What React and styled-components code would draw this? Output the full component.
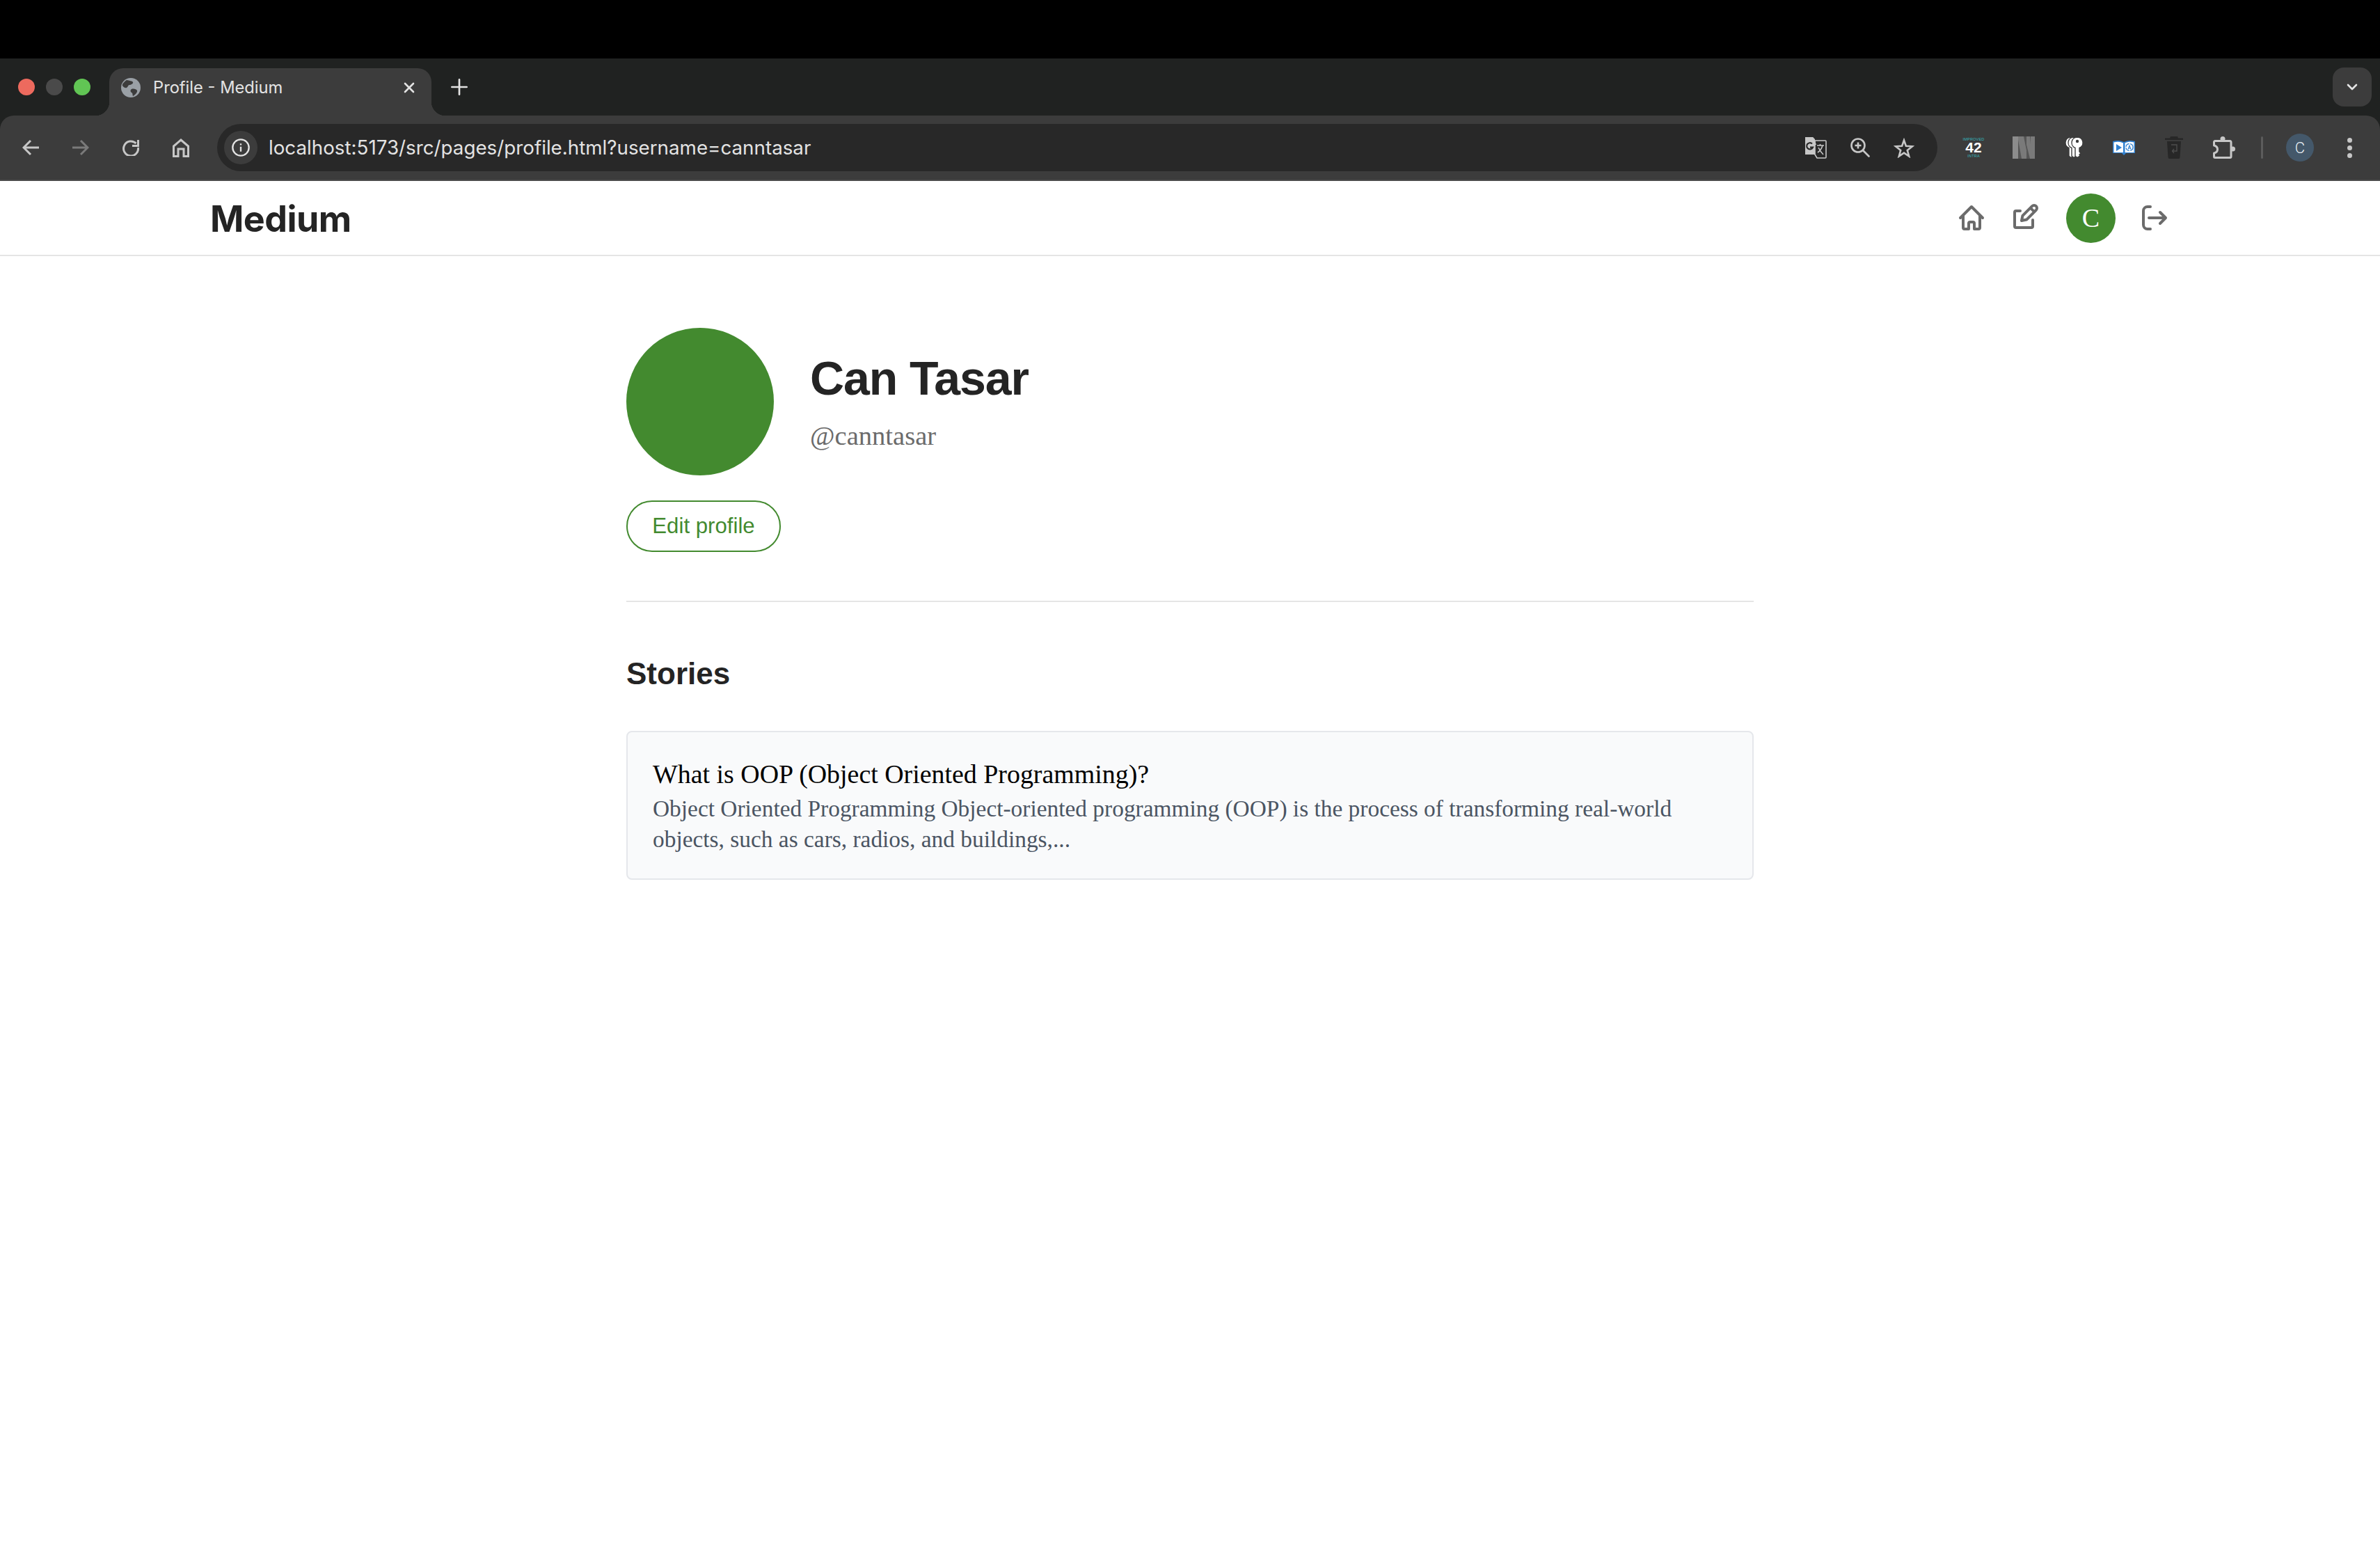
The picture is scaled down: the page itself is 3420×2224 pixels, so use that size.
import React from 'react';
import styled, { createGlobalStyle } from 'styled-components';

const GlobalStyle = createGlobalStyle`
  html, body {
    margin: 0;
    padding: 0;
    background: #fff;
  }
  body {
    font-family: 'Liberation Sans', Arial, sans-serif;
  }
`;

function Line({ d, size = 32, stroke = '#c7c7c7', width = 2.2 }) {
  return (
    <svg width={size} height={size} viewBox="0 0 24 24" fill="none" stroke={stroke} strokeWidth={width} strokeLinecap="round" strokeLinejoin="round">
      <path d={d} />
    </svg>
  );
}

function GlobeIcon() {
  return (
    <svg width="28" height="28" viewBox="0 0 28 28">
      <circle cx="14" cy="14" r="14" fill="#9aa0a6" />
      <path d="M8 3c3 1 8 1 9 3s-3 4-5 4-2 3-4 4-5-1-6-3 3-6 6-8ZM15 16c3-1 7 0 8 2s-3 7-6 8c-1-3 0-4-2-5s-2-4 0-5Z" fill="#3c3c3c" />
    </svg>
  );
}

function BackIcon({ color = '#c7c7c7', flip }) {
  return (
    <svg width="24" height="24" viewBox="0 0 24 24" fill="none" stroke={color} strokeWidth="3" transform={flip ? 'scale(-1 1)' : undefined}>
      <path d="M24 12H3M12 2L2 12l10 10" />
    </svg>
  );
}

function ReloadIcon() {
  return (
    <svg width="24" height="24" viewBox="0 0 24 24" fill="none" stroke="#c7c7c7" strokeWidth="3">
      <path d="M19.5 6A10.5 10.5 0 1 0 22.5 12" />
      <path d="M22.5 1v8.5H14" />
    </svg>
  );
}

function HomeChromeIcon() {
  return (
    <svg width="24" height="27" viewBox="0 0 24 27" fill="none" stroke="#c7c7c7" strokeWidth="3">
      <path d="M1.5 25.5V11L12 2l10.5 9v14.5H16V15H8v10.5Z" />
    </svg>
  );
}

function TranslateIcon() {
  return (
    <svg width="32" height="32" viewBox="0 0 32 32">
      <path d="M1 1h11l3 3v22H1Z" fill="#c7c7c7" />
      <path d="M15 6h15a1 1 0 0 1 1 1v23a1 1 0 0 1-1 1H18l-3-5Z" fill="#282828" stroke="#c7c7c7" strokeWidth="1.6" />
      <path d="M12 1l3 5 2 6h-5Z" fill="#c7c7c7" />
      <path d="M11 10.5a4.6 4.6 0 1 0 1 5.2H8" fill="none" stroke="#282828" strokeWidth="2.2" />
      <path d="M18 13h10M22.5 11v2M26 13c-1.500 5-4 8-7 10M20 16c2 4 4 7 7 10" fill="none" stroke="#c7c7c7" strokeWidth="1.6" />
    </svg>
  );
}

function ZoomIcon() {
  return (
    <svg width="28" height="28" viewBox="0 0 28 28" fill="none" stroke="#c7c7c7" strokeWidth="2.6" strokeLinecap="round">
      <circle cx="11" cy="11" r="9.500" />
      <path d="M18 18l8.500 8.500" />
      <path d="M11 6.500v9M6.500 11h9" strokeLinecap="butt" />
    </svg>
  );
}

function StarIcon() {
  return (
    <svg width="30" height="29" viewBox="0 0 30 29" fill="none" stroke="#c7c7c7" strokeWidth="2.6">
      <path d="M15 3.500l2.900 8.200 9 .6-7.100 5.600 2.400 8.600-7.200-4.900-7.200 4.900 2.400-8.600-7.100-5.600 9-.6Z" />
    </svg>
  );
}

function StripedNIcon() {
  return (
    <svg width="32" height="32" viewBox="0 0 32 32">
      <rect width="8" height="32" fill="#8c8c8c" />
      <rect x="8" width="24" height="32" fill="#7a7a7a" />
      <path d="M8 5l5 27H8ZM16 0h4l0 20ZM20 12l5 20h-5ZM25 0h1v11Z" fill="#555" />
    </svg>
  );
}

const KEY_PATH =
  'M8 0a8 8 0 0 1 3 15.400V21l2 2-2 2 1 1.500-3 2.500h-2l-2-2V15.400A8 8 0 0 1 8 0Z';

function KeysIcon() {
  return (
    <svg width="25" height="30" viewBox="0 0 25 30">
      <path d={KEY_PATH} transform="translate(0 0)" fill="#fff" stroke="#3c3c3c" strokeWidth="1.400" />
      <path d={KEY_PATH} transform="translate(4 0)" fill="#fff" stroke="#3c3c3c" strokeWidth="1.400" />
      <path d={KEY_PATH} transform="translate(9 0)" fill="#fff" stroke="#3c3c3c" strokeWidth="1.400" />
      <circle cx="17" cy="6" r="2.200" fill="#3c3c3c" />
    </svg>
  );
}

function BookIcon() {
  return (
    <svg width="32" height="22" viewBox="0 0 32 22">
      <path d="M0 2c6-2 11-1 16 1 5-2 10-3 16-1v17H19l-3 3-3-3H0Z" fill="#2f80d0" />
      <path d="M1.500 3.500c5-1.500 9-1 13.500 1V18H1.500ZM17.500 4.500c4-2 8-2.500 13-1V18h-13Z" fill="#fff" />
      <path d="M5 6l8 5-8 5Z" fill="#2f80d0" />
      <circle cx="24" cy="10.500" r="5" fill="none" stroke="#2f80d0" strokeWidth="1.300" strokeDasharray="6.500 1.500" />
      <path d="M22 13.500l2-5.500 2 5.500M22.700 12h2.600" fill="none" stroke="#2f80d0" strokeWidth="1.100" />
    </svg>
  );
}

function TrashIcon() {
  return (
    <svg width="26" height="32" viewBox="0 0 26 32">
      <path d="M8 0h10l1 2.500h7V5H0V2.500h7Z" fill="#272727" />
      <path d="M3 7h20l-1.500 23a2 2 0 0 1-2 2h-13a2 2 0 0 1-2-2Z" fill="#272727" />
      <path d="M9 12h8v9h-6M13 18l-2.500 3 2.500 3" fill="none" stroke="#4d4d4d" strokeWidth="1.400" />
    </svg>
  );
}

function PuzzleIcon() {
  return (
    <svg width="32" height="32" viewBox="0 0 32 32">
      <circle cx="14" cy="3.500" r="3.500" fill="#c7c7c7" />
      <circle cx="28.500" cy="18" r="3.500" fill="#c7c7c7" />
      <path d="M3 6.500h21a2 2 0 0 1 2 2V29a1.500 1.500 0 0 1-1.500 1.500H3a1.500 1.500 0 0 1-1.500-1.500v-5c4-1 5-3 5-5.500S5.500 14 1.500 13V8a1.500 1.500 0 0 1 1.500-1.500Z" fill="none" stroke="#c7c7c7" strokeWidth="3" strokeLinejoin="round" />
    </svg>
  );
}

const Frame = styled.div`
  width: 3420px;
  height: 2224px;
  background: #fff;
  overflow: hidden;
`;

const BlackBar = styled.div`
  height: 84px;
  background: #000;
`;

const ChromeShell = styled.div`
  background: #202221;
`;

const TabStrip = styled.div`
  display: flex;
  align-items: flex-end;
  height: 82px;
  padding: 0 12px 0 26px;
`;

const Lights = styled.div`
  display: flex;
  gap: 16px;
  align-self: center;
  margin-right: 27px;
`;

const Light = styled.span`
  width: 24px;
  height: 24px;
  border-radius: 50%;
  background: ${({ $color }) => $color};
`;

const Tab = styled.div`
  position: relative;
  display: flex;
  align-items: center;
  width: 463px;
  height: 68px;
  padding: 0 20px 13px 17px;
  box-sizing: border-box;
  background: #3c3c3c;
  border-radius: 20px 20px 0 0;
  color: #e3e3e3;
  font-family: Inter, sans-serif;
  font-size: 23.7px;

  &::before,
  &::after {
    content: '';
    position: absolute;
    bottom: 0;
    width: 20px;
    height: 20px;
  }
  &::before {
    left: -20px;
    background: radial-gradient(circle at 0 0, transparent 20px, #3c3c3c 20.5px);
  }
  &::after {
    right: -20px;
    background: radial-gradient(circle at 100% 0, transparent 20px, #3c3c3c 20.5px);
  }
`;

const TabTitle = styled.span`
  flex: 1;
  margin-left: 18px;
  white-space: nowrap;
`;

const TabButton = styled.div`
  display: flex;
  align-items: center;
  justify-content: center;
`;

const NewTab = styled(TabButton)`
  align-self: center;
  margin-left: 24px;
`;

const TabMenu = styled.div`
  display: flex;
  align-items: center;
  justify-content: center;
  align-self: center;
  width: 56px;
  height: 56px;
  margin-left: auto;
  border-radius: 16px;
  background: #3c3c3c;
`;

const Toolbar = styled.div`
  display: flex;
  align-items: center;
  height: 94px;
  box-sizing: border-box;
  background: #3c3c3c;
  border-radius: 20px 20px 0 0;
  border-bottom: 2px solid #4a4a4a;
`;

const NavButtons = styled.div`
  display: flex;
  align-items: center;
  width: 312px;
  padding-left: 32px;
  box-sizing: border-box;
  gap: 48px;
`;

const Omnibox = styled.div`
  display: flex;
  align-items: center;
  width: 2472px;
  height: 68px;
  box-sizing: border-box;
  padding: 0 33px 0 10px;
  border-radius: 34px;
  background: #282828;
`;

const InfoChip = styled.div`
  display: flex;
  align-items: center;
  justify-content: center;
  width: 48px;
  height: 48px;
  border-radius: 50%;
  background: #3c3c3c;
`;

const Url = styled.span`
  flex: 1;
  margin-left: 16px;
  color: #e3e3e3;
  font-family: Inter, sans-serif;
  font-size: 27.75px;
  white-space: nowrap;
`;

const OmniActions = styled.div`
  display: flex;
  align-items: center;
  gap: 34px;
`;

const Extensions = styled.div`
  display: flex;
  align-items: center;
  margin-left: 16px;
`;

const ExtSlot = styled.div`
  display: flex;
  align-items: center;
  justify-content: center;
  width: 72px;
  height: 44px;
`;

const Intra = styled.div`
  display: flex;
  flex-direction: column;
  align-items: center;
  font-family: 'Liberation Sans', sans-serif;
  color: #35b6bd;
  font-size: 5.5px;
  letter-spacing: 0.2px;
  line-height: 6px;
`;

const IntraNumber = styled.span`
  color: #fff;
  font-size: 21px;
  font-weight: 700;
  line-height: 18px;
  letter-spacing: 0;
`;

const Separator = styled.div`
  width: 3px;
  height: 32px;
  margin: 0 33px 0 17px;
  background: #5c5c5c;
  border-radius: 2px;
`;

const ProfileChip = styled.div`
  display: flex;
  align-items: center;
  justify-content: center;
  width: 40px;
  height: 40px;
  border-radius: 50%;
  background: #44586a;
  color: #e8eef3;
  font-family: Roboto, sans-serif;
  font-size: 22px;
  font-weight: 300;
`;

const MenuDots = styled.div`
  display: flex;
  flex-direction: column;
  gap: 4px;
  margin-left: 48px;
`;

const Dot = styled.span`
  width: 7px;
  height: 7px;
  border-radius: 50%;
  background: #c7c7c7;
`;

const Navbar = styled.nav`
  display: flex;
  align-items: center;
  justify-content: space-between;
  height: 108px;
  box-sizing: border-box;
  padding: 0 300px;
  border-bottom: 2px solid #e5e5e5;
`;

const Brand = styled.div`
  margin: 2px 0 0 2px;
  color: #242424;
  font-family: Inter, sans-serif;
  font-size: 52px;
  font-weight: 700;
  letter-spacing: -0.6px;
`;

const NavActions = styled.div`
  display: flex;
  align-items: center;
  gap: 32px;
`;

const NavIcon = styled.svg`
  display: block;
  width: 48px;
  height: 48px;
  fill: none;
  stroke: #6b6b6b;
  stroke-width: 2;
  stroke-linecap: round;
  stroke-linejoin: round;
`;

const UserBadge = styled.div`
  display: flex;
  align-items: center;
  justify-content: center;
  width: 71px;
  height: 71px;
  border-radius: 50%;
  background: #438a2f;
  color: #fff;
  font-family: 'Liberation Serif', serif;
  font-size: 38px;
`;

const Main = styled.main`
  width: 1620px;
  margin: 0 auto;
  padding-top: 103px;
`;

const ProfileRow = styled.div`
  display: flex;
  gap: 52px;
`;

const BigAvatar = styled.div`
  width: 212px;
  height: 212px;
  border-radius: 50%;
  background: #438a2f;
`;

const ProfileText = styled.div`
  padding-top: 33px;
`;

const Name = styled.h1`
  margin: 0;
  color: #242424;
  font-size: 68px;
  font-weight: 700;
  line-height: 78px;
  letter-spacing: -1.1px;
`;

const Handle = styled.div`
  margin-top: 21px;
  color: #6b6b6b;
  font-family: 'Liberation Serif', serif;
  font-size: 38.6px;
  line-height: 46px;
`;

const EditButton = styled.button`
  display: block;
  width: 222px;
  height: 74px;
  margin-top: 36px;
  padding: 0;
  border: 2px solid #438a2f;
  border-radius: 37px;
  background: #fff;
  color: #438a2f;
  font-family: 'Liberation Sans', sans-serif;
  font-size: 31.2px;
`;

const Divider = styled.hr`
  height: 2px;
  margin: 70px 0 0;
  border: 0;
  background: #e5e5e5;
`;

const SectionTitle = styled.h2`
  margin: 76px 0 0;
  color: #242424;
  font-size: 44px;
  font-weight: 700;
  line-height: 54px;
`;

const StoryCard = styled.article`
  box-sizing: border-box;
  margin-top: 55px;
  height: 214px;
  padding: 37px 36px 0;
  border: 2px solid #e5e7eb;
  border-radius: 8px;
  background: #f9fafb;
`;

const StoryTitle = styled.h3`
  margin: 0;
  color: #000;
  font-family: 'Liberation Serif', serif;
  font-size: 37.9px;
  font-weight: 400;
  line-height: 46px;
`;

const StoryExcerpt = styled.p`
  margin: 5px 0 0;
  color: #4b5563;
  font-family: 'Liberation Serif', serif;
  font-size: 33.4px;
  line-height: 44px;
`;

export default function App() {
  return (
    <Frame>
      <GlobalStyle />
      <BlackBar />
      <ChromeShell>
        <TabStrip>
          <Lights>
            <Light $color="#ed6a5e" />
            <Light $color="#4a4a4a" />
            <Light $color="#61c554" />
          </Lights>
          <Tab>
            <GlobeIcon />
            <TabTitle>Profile - Medium</TabTitle>
            <TabButton>
              <Line size={24} stroke="#e3e3e3" width={2.6} d="M6 6l12 12M18 6L6 18" />
            </TabButton>
          </Tab>
          <NewTab>
            <Line size={32} stroke="#e3e3e3" width={2} d="M12 4v16M4 12h16" />
          </NewTab>
          <TabMenu>
            <Line size={24} stroke="#e3e3e3" width={2.6} d="M6 9l6 6 6-6" />
          </TabMenu>
        </TabStrip>
        <Toolbar>
          <NavButtons>
            <BackIcon />
            <BackIcon color="#7a7a7a" flip />
            <ReloadIcon />
            <HomeChromeIcon />
          </NavButtons>
          <Omnibox>
            <InfoChip>
              <svg width="28" height="28" viewBox="0 0 24 24" fill="none" stroke="#e3e3e3" strokeWidth="2">
                <circle cx="12" cy="12" r="10" />
                <path d="M12 11v6M12 7v2" />
              </svg>
            </InfoChip>
            <Url>localhost:5173/src/pages/profile.html?username=canntasar</Url>
            <OmniActions>
              <TranslateIcon />
              <ZoomIcon />
              <StarIcon />
            </OmniActions>
          </Omnibox>
          <Extensions>
            <ExtSlot>
              <Intra>
                IMPROVED
                <IntraNumber>42</IntraNumber>
                INTRA
              </Intra>
            </ExtSlot>
            <ExtSlot>
              <StripedNIcon />
            </ExtSlot>
            <ExtSlot>
              <KeysIcon />
            </ExtSlot>
            <ExtSlot>
              <BookIcon />
            </ExtSlot>
            <ExtSlot>
              <TrashIcon />
            </ExtSlot>
            <ExtSlot>
              <PuzzleIcon />
            </ExtSlot>
            <Separator />
            <ProfileChip>C</ProfileChip>
            <MenuDots>
              <Dot />
              <Dot />
              <Dot />
            </MenuDots>
          </Extensions>
        </Toolbar>
      </ChromeShell>
      <Navbar>
        <Brand>Medium</Brand>
        <NavActions>
          <NavIcon viewBox="0 0 24 24">
            <path d="m4 12 8-8 8 8M6 10.500V19a1 1 0 0 0 1 1h3v-4a1 1 0 0 1 1-1h2a1 1 0 0 1 1 1v4h3a1 1 0 0 0 1-1v-8.500" />
          </NavIcon>
          <NavIcon viewBox="0 0 24 24">
            <path d="m14.304 4.844 2.852 2.852M7 7H4a1 1 0 0 0-1 1v10a1 1 0 0 0 1 1h11a1 1 0 0 0 1-1v-4.500m2.409-9.910a2.017 2.017 0 0 1 0 2.853l-6.844 6.844L8 14l.713-3.565 6.844-6.844a2.015 2.015 0 0 1 2.852 0Z" />
          </NavIcon>
          <UserBadge>C</UserBadge>
          <NavIcon viewBox="0 0 24 24">
            <path d="M20 12H8m12 0-4 4m4-4-4-4M9 4H7a3 3 0 0 0-3 3v10a3 3 0 0 0 3 3h2" />
          </NavIcon>
        </NavActions>
      </Navbar>
      <Main>
        <ProfileRow>
          <BigAvatar />
          <ProfileText>
            <Name>Can Tasar</Name>
            <Handle>@canntasar</Handle>
          </ProfileText>
        </ProfileRow>
        <EditButton>Edit profile</EditButton>
        <Divider />
        <SectionTitle>Stories</SectionTitle>
        <StoryCard>
          <StoryTitle>What is OOP (Object Oriented Programming)?</StoryTitle>
          <StoryExcerpt>
            Object Oriented Programming Object-oriented programming (OOP) is the process of transforming real-world
            objects, such as cars, radios, and buildings,...
          </StoryExcerpt>
        </StoryCard>
      </Main>
    </Frame>
  );
}
